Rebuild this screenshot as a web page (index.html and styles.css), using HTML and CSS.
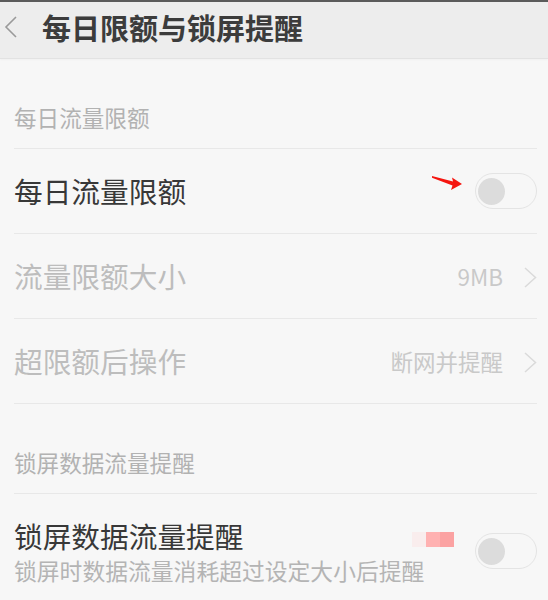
FILE: index.html
```html
<!DOCTYPE html>
<html lang="zh-CN">
<head>
    <meta charset="UTF-8">
    <meta name="viewport" content="width=device-width, initial-scale=1.0">
    <title>每日限额与锁屏提醒</title>
    <link rel="stylesheet" href="styles.css">
</head>
<body>
    <!-- Title bar -->
    <header class="title-bar">
        <svg class="back-icon" width="14" height="22" viewBox="0 0 14 22">
            <path d="M12 1 L2 11 L12 21" fill="none" stroke="#9a9a9a" stroke-width="1.6"/>
        </svg>
        <h1 class="page-title">每日限额与锁屏提醒</h1>
    </header>

    <main class="settings">
        <div class="section-title">每日流量限额</div>

        <div class="row">
            <span class="row-label">每日流量限额</span>
            <div class="switch"><span class="knob"></span></div>
            <svg class="mark-arrow" width="34" height="20" viewBox="0 0 34 20">
                <polygon points="2,3 23,8.5 22,4.5 32,11 21,17 22.5,12.5 2,4.8" fill="#f5150f"/>
            </svg>
        </div>

        <div class="row disabled">
            <span class="row-label">流量限额大小</span>
            <span class="row-value">9MB</span>
            <svg class="chevron" width="13" height="21" viewBox="0 0 13 21">
                <path d="M1 1 L11.5 10.5 L1 20" fill="none" stroke="#dadada" stroke-width="1.5"/>
            </svg>
        </div>

        <div class="row disabled">
            <span class="row-label">超限额后操作</span>
            <span class="row-value">断网并提醒</span>
            <svg class="chevron" width="13" height="21" viewBox="0 0 13 21">
                <path d="M1 1 L11.5 10.5 L1 20" fill="none" stroke="#dadada" stroke-width="1.5"/>
            </svg>
        </div>

        <div class="section-title">锁屏数据流量提醒</div>

        <div class="row row-tall">
            <div class="row-text">
                <span class="row-label">锁屏数据流量提醒</span>
                <span class="row-desc">锁屏时数据流量消耗超过设定大小后提醒</span>
            </div>
            <div class="switch"><span class="knob"></span></div>
            <div class="mark-pink">
                <span class="p1"></span><span class="p2"></span><span class="p3"></span>
            </div>
        </div>
    </main>
</body>
</html>
```

FILE: styles.css
```css
body {
    margin: 0;
    background: #f7f7f7;
    font-family: "Noto Sans CJK SC", "Noto Sans", sans-serif;
    width: 548px;
    height: 600px;
    overflow: hidden;
}

/* Title bar */
.title-bar {
    display: flex;
    align-items: center;
    height: 56px;
    border-top: 2px solid #5b5b5b;
    background: #ededed;
    border-bottom: 1px solid #e2e2e2;
    box-shadow: 0 1px 2px rgba(0, 0, 0, 0.03);
    padding-left: 4px;
}

.back-icon {
    margin-top: -6px;
}

.page-title {
    margin: -6px 0 0 24px;
    font-size: 29px;
    line-height: 36px;
    font-weight: 700;
    color: #3c3c3c;
}

/* List */
.settings {
    padding: 0 11px 0 14px;
}

.section-title {
    padding: 46px 0 18px;
    font-size: 22.6px;
    line-height: 25px;
    color: #b2b2b2;
    border-bottom: 1px solid #e8e8e8;
}

.row {
    position: relative;
    display: flex;
    align-items: center;
    height: 84px;
    border-bottom: 1px solid #e8e8e8;
}

.row-label {
    flex: 1;
    font-size: 28.7px;
    line-height: 36px;
    color: #383838;
}

.row.disabled .row-label {
    color: #bdbdbd;
}

.row-value {
    font-size: 22.5px;
    line-height: 30px;
    color: #c9c9c9;
    margin-right: 21px;
}

.chevron {
    display: block;
    margin-top: 2px;
}

.row-tall {
    height: auto;
    align-items: flex-start;
    padding-top: 24px;
    border-bottom: none;
}

.row-text {
    flex: 1;
    display: flex;
    flex-direction: column;
}

.row-desc {
    font-size: 22.8px;
    line-height: 30px;
    color: #b4b4b4;
    margin-top: 2px;
}

/* Switch */
.switch {
    box-sizing: border-box;
    width: 62px;
    height: 36px;
    border: 1.5px solid #e4e4e4;
    border-radius: 18px;
    background: #f7f7f7;
    display: flex;
    align-items: center;
    padding-left: 2px;
}

.row-tall .switch {
    margin-top: 15px;
}

.knob {
    width: 27px;
    height: 27px;
    border-radius: 50%;
    background: #dcdcdc;
}

/* Annotation marks over the screenshot */
.mark-arrow {
    position: absolute;
    left: 416px;
    top: 24px;
}

.mark-pink {
    position: absolute;
    left: 398px;
    top: 38px;
    display: flex;
    height: 15px;
}

.mark-pink span {
    width: 14px;
    height: 15px;
}

.mark-pink .p1 {
    background: #f9eded;
}

.mark-pink .p2 {
    background: #ffb1b1;
}

.mark-pink .p3 {
    background: #fba2a2;
}
```
